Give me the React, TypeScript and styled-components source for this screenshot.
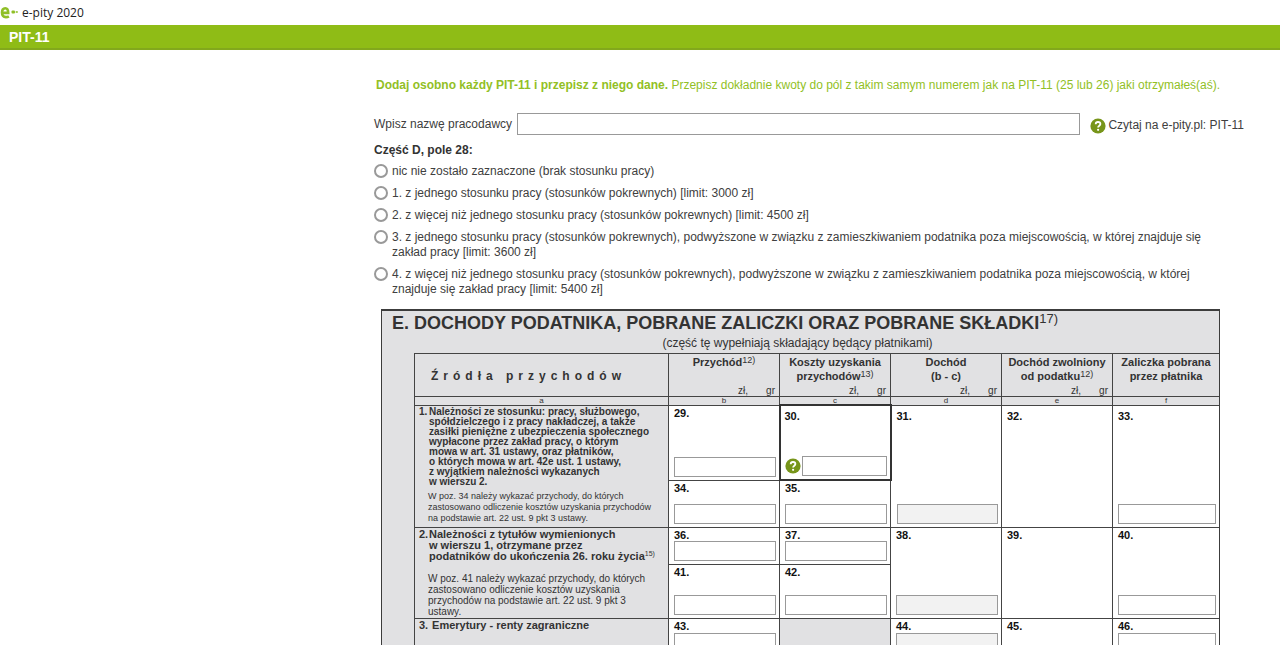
import React from "react";
import styled, { createGlobalStyle } from "styled-components";

const GlobalStyle = createGlobalStyle`
  * { box-sizing: border-box; }
  body {
    margin: 0;
    background: #fff;
    color: #404040;
    font-family: "Liberation Sans", Arial, sans-serif;
    font-size: 12px;
    line-height: 15px;
  }
`;

const Shell = styled.div`
  display: flex;
  flex-direction: column;
  height: 100vh;
`;

const WindowTitle = styled.header`
  display: flex;
  align-items: center;
  flex: none;
  gap: 3px;
  height: 25px;
  color: #222;
  font: 12px/16px "Open Sans", "Noto Sans", sans-serif;
`;

const SectionBar = styled.h1`
  flex: none;
  margin: 0;
  padding: 0 9px;
  height: 25px;
  background: #8fbc16;
  border-bottom: 2px solid #82a81c;
  color: #fff;
  font-size: 14px;
  line-height: 24px;
`;

const Content = styled.main`
  flex: 1;
  min-height: 0;
  padding: 28px 0 0 374px;
  overflow-y: auto;
  scrollbar-width: none;
`;

const Intro = styled.p`
  margin: 0 0 20px;
  padding-left: 2px;
  color: #92bf25;
  line-height: 15px;
`;

const EmployerRow = styled.div`
  display: flex;
  align-items: center;
  gap: 5px;
  padding-right: 36px;
`;

const EmployerInput = styled.input`
  flex: 1;
  min-width: 0;
  height: 22px;
  padding: 0 4px;
  border: 1px solid #999;
  background: #fff;
`;

const HelpLink = styled.a`
  display: flex;
  align-items: center;
  gap: 2px;
  margin-left: 5px;
  padding-top: 3px;
  color: #404040;
  text-decoration: none;
`;

const Options = styled.fieldset`
  display: flex;
  flex-direction: column;
  gap: 7px;
  margin: 8px 70px 12px 0;
  padding: 0;
  border: 0;
`;

const Legend = styled.legend`
  margin-bottom: 6px;
  padding: 0;
  color: #333;
  font-weight: bold;
`;

const Option = styled.label`
  display: flex;
  align-items: flex-start;
  gap: 4px;
`;

const Radio = styled.input`
  appearance: none;
  flex: none;
  width: 14px;
  height: 14px;
  margin: 0;
  border: 2px solid #999;
  border-radius: 50%;
  background: #fff;
  &:checked { box-shadow: inset 0 0 0 2px #fff; background: #77951a; }
`;

const Sheet = styled.section`
  margin: 0 60px 0 7px;
  border: solid #3c3c3c;
  border-width: 2px 1px 0 1px;
  background: #e1e1e3;
  color: #333;
`;

const SheetTitle = styled.h2`
  margin: 0;
  padding-left: 10px;
  font-size: 18px;
  line-height: 24px;
  white-space: nowrap;
`;

const Sup = styled.sup<{ $size: number; $rise: number }>`
  font-size: ${(p) => p.$size}px;
  font-weight: normal;
  line-height: 0;
  vertical-align: ${(p) => p.$rise}px;
`;

const SheetNote = styled.p`
  margin: 0;
  padding-bottom: 2px;
  padding-right: 6px;
  text-align: center;
  line-height: 16px;
`;

const GridTable = styled.table`
  width: calc(100% - 32px);
  margin-left: 32px;
  border-collapse: collapse;
  table-layout: fixed;
  tr > * { border: 1px solid #444; }
  tr > :last-child[data-edge] { border-right: 0; }
`;

const HeadCell = styled.th`
  height: 43px;
  padding: 0;
  font-size: 11px;
  line-height: 14px;
  vertical-align: top;
  white-space: nowrap;
`;

const HeadBody = styled.div`
  display: flex;
  flex-direction: column;
  justify-content: space-between;
  height: 100%;
  padding-top: 1px;
`;

const SourceHead = styled.span`
  display: block;
  padding: 15px 0 0 16px;
  text-align: left;
  font-size: 12px;
  letter-spacing: 5px;
`;

const Units = styled.span`
  display: flex;
  justify-content: flex-end;
  gap: 18px;
  padding-right: 4px;
  font-size: 10px;
  font-weight: normal;
  line-height: 10px;
`;

const LetterCell = styled.th`
  height: 8px;
  padding: 0;
  font-size: 8px;
  font-weight: normal;
  line-height: 7px;
`;

const SourceCell = styled.th`
  padding: 1px 0 0 4px;
  text-align: left;
  vertical-align: top;
  font-size: 10px;
  font-weight: normal;
  white-space: pre;
`;

const SourceText = styled.div<{ $size: number }>`
  display: grid;
  grid-template-columns: 10px 1fr;
  font-size: ${(p) => p.$size}px;
  line-height: ${(p) => p.$size}px;
  font-weight: bold;
`;

const SourceNote = styled.div<{ $gap: number; $size: number }>`
  margin-top: ${(p) => p.$gap}px;
  padding-left: 9px;
  font-size: ${(p) => p.$size}px;
  line-height: 11px;
`;

const ValueCell = styled.td<{ $h: number; $strong?: boolean; $blank?: boolean }>`
  height: ${(p) => p.$h}px;
  padding: 0;
  background: ${(p) => (p.$blank ? "#e1e1e3" : "#fff")};
  && { ${(p) => (p.$strong ? "border: 2px solid #333;" : "")} }
`;

const Field = styled.div<{ $low?: boolean; $strong?: boolean }>`
  display: flex;
  flex-direction: column;
  justify-content: space-between;
  height: 100%;
  padding: ${(p) => (p.$low ? 4 : 1)}px 3px 3px ${(p) => (p.$strong ? 4 : 5)}px;
`;

const FieldNumber = styled.label`
  color: #111;
  font-size: 11px;
  font-weight: bold;
  line-height: 12px;
`;

const FieldControl = styled.div`
  display: flex;
  align-items: center;
  gap: 1px;
`;

const Amount = styled.input`
  flex: 1;
  min-width: 0;
  height: 20px;
  padding: 0 3px;
  border: 1px solid #999;
  background: #fff;
  &:read-only { background: #f2f2f2; }
`;

const HelpButton = styled.button`
  display: flex;
  padding: 0;
  border: 0;
  background: none;
`;

const HelpIcon = () => (
  <svg width="16" height="16" viewBox="0 0 16 16" aria-hidden="true">
    <circle cx="8" cy="8" r="7.6" fill="#77951a" />
    <path d="M5.7 6.3C5.7 4.8 6.7 4 8 4s2.4.8 2.4 2.1c0 1.5-2.3 1.7-2.3 3.4" fill="none" stroke="#fff" strokeWidth="1.8" />
    <circle cx="8.1" cy="11.8" r="1.1" fill="#fff" />
  </svg>
);

const Logo = () => (
  <svg width="19" height="16" viewBox="0 0 19 16" aria-hidden="true">
    <path d="M2.200 7.900h6C8.200 4.900 7.200 3.200 5.300 3.200 3.200 3.200 2 4.900 2 7.600c0 2.800 1.400 4.500 3.900 4.500 1.200 0 2.200-.3 3-.8" fill="none" stroke="#8fbf26" strokeWidth="2.600" />
    <rect x="11.500" y="5.500" width="3.500" height="3" rx="1" fill="#8fbf26" />
    <rect x="15.500" y="6" width="2.500" height="2" rx="1" fill="#a3cb50" />
  </svg>
);

type ValueProps = {
  n: number;
  h: number;
  span?: number;
  low?: boolean;
  strong?: boolean;
  help?: boolean;
  computed?: boolean;
  empty?: boolean;
  edge?: boolean;
};

const Value = ({ n, h, span, low, strong, help, computed, empty, edge }: ValueProps) => (
  <ValueCell $h={h} $strong={strong} rowSpan={span} data-edge={edge ? "" : undefined}>
    <Field $low={low} $strong={strong}>
      <FieldNumber as={empty ? "span" : "label"} htmlFor={empty ? undefined : `pole-${n}`}>{n}.</FieldNumber>
      {!empty && (
        <FieldControl>
          {help && <HelpButton type="button" aria-label="Pomoc"><HelpIcon /></HelpButton>}
          <Amount id={`pole-${n}`} type="text" readOnly={computed} />
        </FieldControl>
      )}
    </Field>
  </ValueCell>
);

const OPTIONS = [
  "nic nie zostało zaznaczone (brak stosunku pracy)",
  "1. z jednego stosunku pracy (stosunków pokrewnych) [limit: 3000 zł]",
  "2. z więcej niż jednego stosunku pracy (stosunków pokrewnych) [limit: 4500 zł]",
  "3. z jednego stosunku pracy (stosunków pokrewnych), podwyższone w związku z zamieszkiwaniem podatnika poza miejscowością, w której znajduje się zakład pracy [limit: 3600 zł]",
  "4. z więcej niż jednego stosunku pracy (stosunków pokrewnych), podwyższone w związku z zamieszkiwaniem podatnika poza miejscowością, w której znajduje się zakład pracy [limit: 5400 zł]",
];

const SOURCE_1 = `Należności ze stosunku: pracy, służbowego,
spółdzielczego i z pracy nakładczej, a także
zasiłki pieniężne z ubezpieczenia społecznego
wypłacone przez zakład pracy, o którym
mowa w art. 31 ustawy, oraz płatników,
o których mowa w art. 42e ust. 1 ustawy,
z wyjątkiem należności wykazanych
w wierszu 2.`;

const NOTE_1 = `W poz. 34 należy wykazać przychody, do których
zastosowano odliczenie kosztów uzyskania przychodów
na podstawie art. 22 ust. 9 pkt 3 ustawy.`;

const SOURCE_2 = `Należności z tytułów wymienionych
w wierszu 1, otrzymane przez
podatników do ukończenia 26. roku życia`;

const NOTE_2 = `W poz. 41 należy wykazać przychody, do których
zastosowano odliczenie kosztów uzyskania
przychodów na podstawie art. 22 ust. 9 pkt 3
ustawy.`;

const UnitLabels = () => (
  <Units><span>zł,</span><span>gr</span></Units>
);

export default function App() {
  return (
    <Shell>
      <GlobalStyle />
      <WindowTitle><Logo /><span>e-pity 2020</span></WindowTitle>
      <SectionBar>PIT-11</SectionBar>
      <Content>
        <Intro>
          <strong>Dodaj osobno każdy PIT-11 i przepisz z niego dane.</strong>{" "}
          Przepisz dokładnie kwoty do pól z takim samym numerem jak na PIT-11 (25 lub 26) jaki otrzymałeś(aś).
        </Intro>
        <EmployerRow>
          <label htmlFor="pracodawca">Wpisz nazwę pracodawcy</label>
          <EmployerInput id="pracodawca" type="text" />
          <HelpLink href="#pit-11"><HelpIcon />Czytaj na e-pity.pl: PIT-11</HelpLink>
        </EmployerRow>
        <Options>
          <Legend>Część D, pole 28:</Legend>
          {OPTIONS.map((text, i) => (
            <Option key={i}>
              <Radio type="radio" name="pole-28" value={i} />
              <span>{text}</span>
            </Option>
          ))}
        </Options>
        <Sheet>
          <SheetTitle>
            E. DOCHODY PODATNIKA, POBRANE ZALICZKI ORAZ POBRANE SKŁADKI<Sup $size={13} $rise={6}>17)</Sup>
          </SheetTitle>
          <SheetNote>(część tę wypełniają składający będący płatnikami)</SheetNote>
          <GridTable>
            <colgroup>
              <col style={{ width: 254 }} />
              <col style={{ width: 111 }} />
              <col style={{ width: 111 }} />
              <col style={{ width: 111 }} />
              <col style={{ width: 111 }} />
              <col />
            </colgroup>
            <thead>
              <tr>
                <HeadCell scope="col"><SourceHead>Źródła przychodów</SourceHead></HeadCell>
                <HeadCell scope="col">
                  <HeadBody><span>Przychód<Sup $size={9} $rise={3}>12)</Sup></span><UnitLabels /></HeadBody>
                </HeadCell>
                <HeadCell scope="col">
                  <HeadBody><span>Koszty uzyskania<br />przychodów<Sup $size={9} $rise={3}>13)</Sup></span><UnitLabels /></HeadBody>
                </HeadCell>
                <HeadCell scope="col">
                  <HeadBody><span>Dochód<br />(b - c)</span><UnitLabels /></HeadBody>
                </HeadCell>
                <HeadCell scope="col">
                  <HeadBody><span>Dochód zwolniony<br />od podatku<Sup $size={9} $rise={3}>12)</Sup></span><UnitLabels /></HeadBody>
                </HeadCell>
                <HeadCell scope="col" data-edge="">
                  <HeadBody><span>Zaliczka pobrana<br />przez płatnika</span></HeadBody>
                </HeadCell>
              </tr>
              <tr>
                {["a", "b", "c", "d", "e", "f"].map((l) => (
                  <LetterCell key={l} data-edge={l === "f" ? "" : undefined}>{l}</LetterCell>
                ))}
              </tr>
            </thead>
            <tbody>
              <tr>
                <SourceCell scope="rowgroup" rowSpan={2}>
                  <SourceText $size={10}><span>1.</span><span>{SOURCE_1}</span></SourceText>
                  <SourceNote $gap={4} $size={9}>{NOTE_1}</SourceNote>
                </SourceCell>
                <Value n={29} h={75} />
                <Value n={30} h={75} low strong help />
                <Value n={31} h={122} span={2} low computed />
                <Value n={32} h={122} span={2} low empty />
                <Value n={33} h={122} span={2} low edge />
              </tr>
              <tr>
                <Value n={34} h={47} />
                <Value n={35} h={47} />
              </tr>
              <tr>
                <SourceCell scope="rowgroup" rowSpan={2}>
                  <SourceText $size={11}><span>2.</span><span>{SOURCE_2}<Sup $size={7} $rise={4}>15)</Sup></span></SourceText>
                  <SourceNote $gap={11} $size={10}>{NOTE_2}</SourceNote>
                </SourceCell>
                <Value n={36} h={37} />
                <Value n={37} h={37} />
                <Value n={38} h={91} span={2} computed />
                <Value n={39} h={91} span={2} empty />
                <Value n={40} h={91} span={2} edge />
              </tr>
              <tr>
                <Value n={41} h={54} />
                <Value n={42} h={54} />
              </tr>
              <tr>
                <SourceCell scope="row">
                  <SourceText $size={11}><span>3.</span><span> Emerytury - renty zagraniczne</span></SourceText>
                </SourceCell>
                <Value n={43} h={38} />
                <ValueCell $h={38} $blank />
                <Value n={44} h={38} computed />
                <Value n={45} h={38} empty />
                <Value n={46} h={38} edge />
              </tr>
            </tbody>
          </GridTable>
        </Sheet>
      </Content>
    </Shell>
  );
}
